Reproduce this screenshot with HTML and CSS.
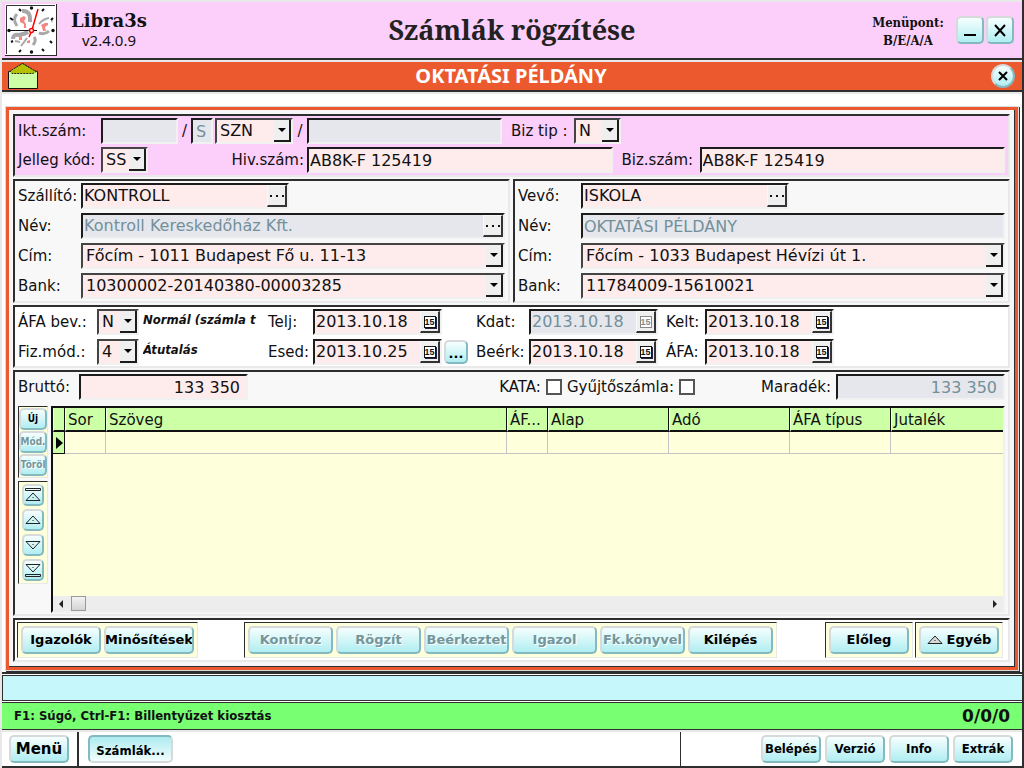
FILE: index.html
```html
<!DOCTYPE html>
<html lang="hu">
<head>
<meta charset="utf-8">
<title>Számlák rögzítése</title>
<link rel="stylesheet" href="styles.css">
</head>
<body>
<div class="app">
  <header class="titlebar">
    <svg class="clock" viewBox="0 0 52 52" width="52" height="52" aria-hidden="true">
      <rect width="52" height="52" fill="#2b2b2b"/>
      <rect width="51" height="51" fill="#fff"/>
      <path d="M1.500 50V1.500H50" fill="none" stroke="#333"/>
      <g fill="none" stroke="#a8a8a8" stroke-width="3">
        <path d="M12 22Q7 15 12 10"/>
        <path d="M17 7Q26 6 25 18" stroke-width="4"/>
        <path d="M34 20Q38 15 44 14" stroke-width="2"/>
        <path d="M46 17h2" stroke="#ccc"/>
        <path d="M34 29Q40 31 44 27"/>
        <path d="M8 35Q8 30 14 31Q20 30 23 28" stroke-width="4"/>
        <path d="M10 37l5 1M22 34Q20 37 16 42" stroke-width="2"/>
        <path d="M29 33Q32 36 28 41"/>
      </g>
      <g fill="#f58580">
        <path d="M15 14l4-2 2 2-2 3 2 3v4h-2v-4l-4-2zM36 21l4-2h3v2l-3 2 1 4h-3l-1-4zM14 33l3-1v4h-3zM22 37l3-1v3h-3z"/>
      </g>
      <g fill="#111">
        <circle cx="26.500" cy="4" r="1.700"/><circle cx="26.500" cy="48" r="1.700"/><circle cx="4" cy="26.500" r="1.700"/><circle cx="48" cy="26.500" r="1.700"/>
      </g>
      <path d="M14 5l2 2M37 7l2-2M5 14l3 2M46 16l2-2M6 38l2-1M45 37l2 2M14 48l2-2M37 45l2 2" stroke="#111" stroke-width="2"/>
      <path d="M5 26.500H32" stroke="#111"/>
      <path d="M33 5L27 26L24 33" fill="none" stroke="#f00" stroke-width="1.500"/>
      <circle cx="26.500" cy="26.500" r="2" fill="#fff" stroke="#f00" stroke-width="1.500"/>
    </svg>
    <div class="brand"><strong>Libra3s</strong><span>v2.4.0.9</span></div>
    <h1>Számlák rögzítése</h1>
    <div class="menupoint"><span>Menüpont:</span><span>B/E/A/A</span></div>
    <div class="winbuttons">
      <button class="btn win" aria-label="Kis méret"><svg width="14" height="14" viewBox="0 0 14 14"><path d="M1 12H13" stroke="#000" stroke-width="2"/></svg></button>
      <button class="btn win" aria-label="Bezárás"><svg width="14" height="14" viewBox="0 0 14 14"><path d="M2 2L12 13M12 2L2 13" stroke="#000" stroke-width="2"/></svg></button>
    </div>
  </header>

  <div class="banner">
    <svg width="32" height="28" viewBox="0 0 32 28" aria-hidden="true">
      <path d="M1.500 9.500L4 9L15.500 1.500L28 9L30.500 9.500V26.500H1.500Z" fill="#ccffa6" stroke="#111"/>
      <path d="M15.500 1.500L29 9.500L26 11.500H5L3 9Z" fill="#b4c000" stroke="#222" stroke-dasharray="2 1"/>
    </svg>
    <h2>OKTATÁSI PÉLDÁNY</h2>
    <button class="btn round" aria-label="Panel bezárása"><svg width="10" height="10" viewBox="0 0 10 10"><path d="M1 1L9 9M9 1L1 9" stroke="#000" stroke-width="2"/></svg></button>
  </div>

  <main class="workspace">
    <form class="frame">
      <section class="panel pink">
        <div class="row">
          <label class="lead" for="ikt">Ikt.szám:</label>
          <input id="ikt" class="field off w-ikt" disabled>
          <span class="slash">/</span>
          <input class="field off w-s" value="S" aria-label="Típus" disabled>
          <span class="combo w-szn"><select aria-label="Sorozat"><option>SZN</option></select><i class="arrow"></i></span>
          <span class="slash">/</span>
          <input class="field off w-long" aria-label="Sorszám" disabled>
          <label class="biztip" for="biztip">Biz tip :</label>
          <span class="combo w-n"><select id="biztip"><option>N</option></select><i class="arrow"></i></span>
        </div>
        <div class="row">
          <label class="lead" for="jelleg">Jelleg kód:</label>
          <span class="combo w-n"><select id="jelleg"><option>SS</option></select><i class="arrow"></i></span>
          <label class="hiv" for="hiv">Hiv.szám:</label>
          <input id="hiv" class="field grow" value="AB8K-F 125419">
          <label class="biz" for="biz">Biz.szám:</label>
          <input id="biz" class="field grow" value="AB8K-F 125419">
        </div>
      </section>

      <div class="partners">
        <section class="panel partner">
          <label for="szall">Szállító:</label>
          <span class="picker short"><input id="szall" value="KONTROLL"><button type="button" class="face" aria-label="Keresés"><i class="dots"></i></button></span>
          <label for="sznev">Név:</label>
          <span class="picker off"><input id="sznev" value="Kontroll Kereskedőház Kft." disabled><button type="button" class="face" aria-label="Keresés"><i class="dots"></i></button></span>
          <label for="szcim">Cím:</label>
          <span class="combo"><select id="szcim"><option>Főcím - 1011 Budapest Fő u. 11-13</option></select><i class="arrow"></i></span>
          <label for="szbank">Bank:</label>
          <span class="combo"><select id="szbank"><option>10300002-20140380-00003285</option></select><i class="arrow"></i></span>
        </section>
        <section class="panel partner">
          <label for="vevo">Vevő:</label>
          <span class="picker short"><input id="vevo" value="ISKOLA"><button type="button" class="face" aria-label="Keresés"><i class="dots"></i></button></span>
          <label for="vnev">Név:</label>
          <input id="vnev" class="field off" value="OKTATÁSI PÉLDÁNY" disabled>
          <label for="vcim">Cím:</label>
          <span class="combo"><select id="vcim"><option>Főcím - 1033 Budapest Hévízi út 1.</option></select><i class="arrow"></i></span>
          <label for="vbank">Bank:</label>
          <span class="combo"><select id="vbank"><option>11784009-15610021</option></select><i class="arrow"></i></span>
        </section>
      </div>

      <section class="panel white dates">
        <label for="afabev">ÁFA bev.:</label>
        <span class="combo narrow"><select id="afabev"><option>N</option></select><i class="arrow"></i></span>
        <em>Normál (számla t</em>
        <label for="telj">Telj:</label>
        <span class="picker"><input id="telj" value="2013.10.18"><button type="button" class="face cal" aria-label="Naptár"><i>15</i></button></span>
        <span></span>
        <label for="kdat">Kdat:</label>
        <span class="picker off"><input id="kdat" value="2013.10.18" disabled><button type="button" class="face cal" aria-label="Naptár" disabled><i>15</i></button></span>
        <label for="kelt">Kelt:</label>
        <span class="picker"><input id="kelt" value="2013.10.18"><button type="button" class="face cal" aria-label="Naptár"><i>15</i></button></span>

        <label for="fizmod">Fiz.mód.:</label>
        <span class="combo narrow"><select id="fizmod"><option>4</option></select><i class="arrow"></i></span>
        <em>Átutalás</em>
        <label for="esed">Esed:</label>
        <span class="picker"><input id="esed" value="2013.10.25"><button type="button" class="face cal" aria-label="Naptár"><i>15</i></button></span>
        <button type="button" class="btn more">...</button>
        <label for="beerk">Beérk:</label>
        <span class="picker"><input id="beerk" value="2013.10.18"><button type="button" class="face cal" aria-label="Naptár"><i>15</i></button></span>
        <label for="afa">ÁFA:</label>
        <span class="picker"><input id="afa" value="2013.10.18"><button type="button" class="face cal" aria-label="Naptár"><i>15</i></button></span>
      </section>

      <section class="panel items">
        <div class="row totals">
          <label class="brutto" for="brutto">Bruttó:</label>
          <input id="brutto" class="field num" value="133 350">
          <div class="checks">
            <label for="kata">KATA:</label><input type="checkbox" id="kata">
            <label for="gyujto">Gyűjtőszámla:</label><input type="checkbox" id="gyujto">
          </div>
          <label for="maradek" class="maradek">Maradék:</label>
          <input id="maradek" class="field num off" value="133 350" disabled>
        </div>
        <div class="gridarea">
          <div class="tools">
            <div class="group edit">
              <button type="button" class="btn tiny">Új</button>
              <button type="button" class="btn tiny" disabled>Mód.</button>
              <button type="button" class="btn tiny" disabled>Töröl</button>
            </div>
            <div class="group nav">
              <button type="button" class="btn step" aria-label="Első"><svg width="16" height="14" viewBox="0 0 16 14"><path d="M.5 .5h15v2H.5ZM8 5L15 12.500H1Z"/><path d="M7.500 9.500h1"/></svg></button>
              <button type="button" class="btn step" aria-label="Előző"><svg width="16" height="14" viewBox="0 0 16 14"><path d="M8 3L15 10.500H1Z"/><path d="M7.500 7.500h1"/></svg></button>
              <button type="button" class="btn step" aria-label="Következő"><svg width="16" height="14" viewBox="0 0 16 14"><path d="M1 3.500H15L8 11Z"/><path d="M7.500 6.500h1"/></svg></button>
              <button type="button" class="btn step" aria-label="Utolsó"><svg width="16" height="14" viewBox="0 0 16 14"><path d="M1 1.500H15L8 9ZM.5 11.500h15v2H.5Z"/><path d="M7.500 4.500h1"/></svg></button>
            </div>
          </div>
          <div class="sheet">
            <div class="sheetbody">
              <table>
                <colgroup><col class="c-mark"><col class="c-sor"><col class="c-text"><col class="c-af"><col class="c-num"><col class="c-num"><col class="c-typ"><col class="c-jut"></colgroup>
                <thead><tr><th></th><th>Sor</th><th>Szöveg</th><th>ÁF...</th><th>Alap</th><th>Adó</th><th>ÁFA típus</th><th>Jutalék</th></tr></thead>
                <tbody><tr><td class="mark"><svg width="7" height="12" viewBox="0 0 7 12"><path d="M0 0L7 6L0 12Z"/></svg></td><td></td><td></td><td></td><td></td><td></td><td></td><td></td></tr></tbody>
              </table>
            </div>
            <div class="scroll" aria-hidden="true">
              <svg width="4" height="8" viewBox="0 0 4 8"><path d="M4 0V8L0 4Z"/></svg>
              <span class="thumb"></span>
              <svg width="4" height="8" viewBox="0 0 4 8"><path d="M0 0V8L4 4Z"/></svg>
            </div>
          </div>
        </div>
      </section>

      <section class="panel white actions">
        <div class="group">
          <button type="button" class="btn w80">Igazolók</button>
          <button type="button" class="btn w90">Minősítések</button>
        </div>
        <div class="group center">
          <button type="button" class="btn" disabled>Kontíroz</button>
          <button type="button" class="btn" disabled>Rögzít</button>
          <button type="button" class="btn" disabled>Beérkeztet</button>
          <button type="button" class="btn" disabled>Igazol</button>
          <button type="button" class="btn" disabled>Fk.könyvel</button>
          <button type="button" class="btn">Kilépés</button>
        </div>
        <div class="group"><button type="button" class="btn w80">Előleg</button></div>
        <div class="group"><button type="button" class="btn w80"><svg width="16" height="10" viewBox="0 0 16 10"><path d="M8 1L15 8.500H1Z" fill="#d8d8d8" stroke="#222"/><path d="M7.500 5.500h1" stroke="#222"/></svg>Egyéb</button></div>
      </section>
    </form>
  </main>

  <div class="message"></div>
  <div class="status"><span>F1: Súgó, Ctrl-F1: Billentyűzet kiosztás</span><strong>0/0/0</strong></div>
  <footer class="taskbar">
    <div class="start"><button class="btn menu">Menü</button></div>
    <div class="tasks"><button class="btn pressed">Számlák...</button></div>
    <div class="system">
      <button class="btn">Belépés</button><button class="btn">Verzió</button><button class="btn">Info</button><button class="btn">Extrák</button>
    </div>
  </footer>
</div>
</body>
</html>
```

FILE: styles.css
```css
* { box-sizing: border-box; }

body {
  margin: 0;
  font: 15px/20px Verdana, "DejaVu Sans", sans-serif;
  color: #111;
}

.app {
  display: flex;
  flex-direction: column;
  min-height: 100vh;
  background: #fff;
  border-left: 2px solid #e8e8e8;
  border-right: 2px solid #2e2e2e;
}

input, select, button { font: inherit; color: inherit; margin: 0; }
svg { display: block; flex: none; }

/* Title bar */
.titlebar {
  display: grid;
  grid-template-columns: 66px 87px 1fr 84px 64px;
  align-items: center;
  height: 60px;
  padding: 0 8px 0 3px;
  background: #fccefa;
  border-top: 2px solid #e8e8e8;
  border-bottom: 2px solid #2e2e2e;
}
.brand {
  display: flex;
  flex-direction: column;
  align-items: flex-start;
}
.brand strong { font: bold 18px/20px Georgia, "DejaVu Serif", serif; }
.brand span { font: 15px/18px "Trebuchet MS", "Noto Sans", sans-serif; padding-left: 11px; }
h1 {
  margin: 0;
  text-align: center;
  color: #222;
  font: bold 27px/36px Georgia, "Noto Serif", "Liberation Serif", serif;
}
.menupoint {
  display: flex;
  flex-direction: column;
  padding-top: 4px;
  text-align: center;
  font: bold 13px/18px "Droid Serif", "DejaVu Serif Condensed", "DejaVu Serif", serif;
}
.winbuttons { display: flex; gap: 2px; justify-content: flex-end; }

/* Glossy buttons */
.btn {
  display: flex;
  align-items: center;
  justify-content: center;
  gap: 4px;
  width: 85px;
  height: 28px;
  padding: 0;
  overflow: hidden;
  white-space: nowrap;
  font: bold 13px/16px Verdana, "DejaVu Sans", sans-serif;
  color: #000;
  background: linear-gradient(#f6fefe, #b0eef2);
  border: 2px solid;
  border-color: #d6dadb #84b9bf #84b9bf #d6dadb;
  border-radius: 5px;
}
.btn:disabled { color: #74969b; text-shadow: 1px 1px #fff; }
.btn.w80 { width: 80px; }
.btn.w90 { width: 90px; }
.btn.win { width: 28px; }
.btn.round { width: 24px; height: 24px; border-radius: 50%; justify-self: end; }
.btn.more { width: 24px; height: 24px; align-items: flex-end; }
.btn.tiny { width: 28px; height: 22px; font: bold 10px/16px "DejaVu Sans Condensed", Tahoma, sans-serif; }
.btn.step { width: 22px; height: 22px; }
.btn.step path { fill: none; stroke: #222; }
.btn.pressed {
  padding-top: 4px;
  background: linear-gradient(#aeecf0, #f2fdfd);
  border-color: #84b9bf #d6dadb #d6dadb #84b9bf;
}

/* Banner */
.banner {
  display: grid;
  grid-template-columns: 32px 1fr 32px;
  align-items: center;
  height: 32px;
  padding: 0 7px 0 5px;
  background: #ec592e;
  border-top: 2px solid #e8e8e8;
  border-bottom: 2px solid #2e2e2e;
}
.banner h2 {
  margin: 0;
  text-align: center;
  color: #fff;
  font: bold 20px/26px "Trebuchet MS", "Noto Sans", sans-serif;
}

/* Work area */
.workspace {
  flex: 1;
  display: flex;
  padding: 13px 4px 2px 4px;
  border-top: 2px solid #e8e8e8;
  border-bottom: 2px solid #2e2e2e;
}
.frame {
  flex: 1;
  min-width: 0;
  display: flex;
  flex-direction: column;
  gap: 2px;
  padding: 4px 5px 5px 4px;
  background: #f7f7f9;
  border: 3px solid #ec592e;
  outline: 1px solid #d8dadb;
  box-shadow: inset -1px -1px #2e2e2e, 1px 1px 0 1px #2e2e2e;
}
.panel {
  border: 2px solid;
  border-color: #2e2e2e #e9e9e9 #e9e9e9 #2e2e2e;
  background: #f8f8f8;
  padding: 2px 3px;
}
.pink { background: #fccefa; display: flex; flex-direction: column; gap: 3px; }
.white { background: #fff; }
.row { display: flex; align-items: center; }
label, .slash { white-space: nowrap; }

/* Fields */
.field, .combo, .picker {
  height: 26px;
  min-width: 0;
  border: 2px solid;
  border-color: #1c1c1c #f1f1f1 #f1f1f1 #1c1c1c;
  border-radius: 0;
  background: #feebeb;
  font-size: 16px;
}
.field { padding: 0 1px; }
.field.off, .picker.off { background: #e5e7ed; color: #73909a; }
.grow { flex: 1; }
.combo { display: flex; position: relative; border-color: #444 #f1f1f1 #f1f1f1 #444; }
.combo select {
  appearance: none;
  width: 100%;
  padding: 0 17px 0 3px;
  border: 0;
  background: transparent;
}
.arrow {
  position: absolute;
  top: 0;
  right: 0;
  bottom: 0;
  width: 17px;
  display: grid;
  place-items: center;
  pointer-events: none;
  background: #efefef;
  border-right: 2px solid #1c1c1c;
  border-bottom: 2px solid #1c1c1c;
}
.arrow::after {
  content: "";
  border: 4px solid transparent;
  border-top-color: #000;
  border-bottom: 0;
}
.picker { display: flex; }
.picker input {
  flex: 1;
  min-width: 0;
  padding: 0 1px;
  border: 0;
  background: transparent;
}
.face {
  width: 20px;
  flex: none;
  padding: 0;
  display: grid;
  place-items: center;
  background: #efefef;
  border: 1px solid;
  border-color: #f8f8f8 #333 #333 #f8f8f8;
  border-right-width: 2px;
  border-bottom-width: 2px;
}
.dots { width: 14px; height: 2px; background: repeating-linear-gradient(90deg, #111 0 2px, transparent 2px 6px); }
.cal i {
  width: 12px;
  height: 12px;
  font: bold 9px/10px "Liberation Sans", sans-serif;
  text-align: center;
  background: #fff;
  border: 1px solid #111;
  box-shadow: 1px 1px #224;
}
.cal:disabled i { border-color: #888; color: #888; box-shadow: none; }

.lead { width: 83px; }
.w-ikt { width: 77px; }
.slash { width: 13px; text-align: center; }
.w-s { width: 22px; margin-right: 2px; padding: 0 3px; }
.w-szn { width: 78px; }
.w-szn + .slash { width: 14px; }
.w-long { width: 195px; }
.biztip { width: 72px; padding-left: 9px; }
.w-n { width: 47px; }
.hiv { width: 159px; padding-right: 3px; text-align: right; }
.biz { width: 87px; padding-left: 9px; }

.partners { display: flex; gap: 3px; }
.partner {
  flex: 1;
  display: grid;
  grid-template-columns: 63px 1fr;
  gap: 4px 0;
  align-items: center;
  padding-bottom: 2px;
}
.short { width: 208px; }

.dates {
  display: grid;
  grid-template-columns: 79px 46px 125px 45px 131px 32px 53px 137px 39px 129px;
  gap: 4px 0;
  align-items: center;
  padding-bottom: 1px;
}
.dates .combo { width: 42px; }
.dates .picker { width: 129px; }
.dates em {
  overflow: hidden;
  padding-bottom: 4px;
  white-space: nowrap;
  font: italic bold 13px/16px "DejaVu Sans Condensed", Tahoma, sans-serif;
  width: 122px;
}

/* Items */
.items { flex: 1; display: flex; flex-direction: column; gap: 6px; padding-bottom: 1px; }
.brutto { width: 61px; }
.num { width: 169px; padding: 0 6px; text-align: right; }
.checks { flex: 1; display: flex; align-items: center; justify-content: flex-end; gap: 5px; }
.checks input {
  appearance: none;
  width: 16px;
  height: 16px;
  background: #fff;
  border: 2px solid #555;
}
.maradek { padding: 0 5px 0 66px; }
.gridarea { flex: 1; display: flex; gap: 3px; }
.tools { width: 30px; display: flex; flex-direction: column; align-items: flex-start; gap: 3px; }
.group {
  display: flex;
  gap: 3px;
  padding: 3px;
  background: #feffdb;
  border: 1px solid;
  border-color: #2e2e2e #e9e9e9 #e9e9e9 #2e2e2e;
}
.edit { flex-direction: column; gap: 1px; padding: 1px 0; }
.nav { flex-direction: column; padding: 2px 3px; }
.sheet {
  flex: 1;
  min-width: 0;
  display: flex;
  flex-direction: column;
  background: #feffdb;
  border: 2px solid;
  border-color: #111 #f1f1f1 #f1f1f1 #111;
}
.sheetbody { flex: 1; }
table { width: 100%; table-layout: fixed; border-collapse: separate; border-spacing: 0; }
.c-mark { width: 12px; }
.c-sor, .c-af { width: 41px; }
.c-text { width: 401px; }
.c-num { width: 121px; }
.c-typ { width: 101px; }
th {
  height: 24px;
  padding: 1px 2px 0;
  overflow: hidden;
  white-space: nowrap;
  text-align: left;
  font-weight: normal;
  background: #ccffa6;
  border-right: 1px solid #111;
  border-left: 1px solid #efffe0;
  border-bottom: 2px solid #111;
}
td { height: 22px; padding: 0; border-right: 1px solid #c4c4c4; border-bottom: 1px solid #c4c4c4; }
th:last-child, td:last-child { border-right: 0; }
.mark { padding-left: 3px; background: #ccffa6; border-color: #111; }
.scroll {
  display: flex;
  align-items: center;
  height: 15px;
  padding: 0 6px;
  background: #ededed;
  fill: #222;
}
.thumb {
  width: 15px;
  height: 15px;
  margin: 0 auto 0 8px;
  background: linear-gradient(#f3f3f3, #d4d4d4);
  border: 1px solid #999;
}

/* Actions */
.actions { display: flex; padding: 2px 5px 2px 2px; gap: 2px; }
.actions .center { margin: 0 auto 0 44px; }

/* Bottom bars */
.message {
  height: 26px;
  margin: 1px 0 0;
  background: #c5f7fb;
  border: 1px solid #2e2e2e;
  border-right: 0;
}
.status {
  display: flex;
  align-items: center;
  justify-content: space-between;
  height: 28px;
  margin-top: 1px;
  padding: 0 12px 0 12px;
  background: #78ff72;
  border-top: 1px solid #2e2e2e;
  border-bottom: 1px solid #2e2e2e;
}
.status span { font: bold 13px/16px "DejaVu Sans Condensed", Tahoma, sans-serif; }
.status strong { font-size: 17px; }
.taskbar {
  display: flex;
  height: 38px;
  border-top: 2px solid #e8e8e8;
  border-bottom: 2px solid #2e2e2e;
}
.start { padding: 3px 8px 0 7px; border-right: 2px solid #2e2e2e; }
.tasks { flex: 1; padding: 3px 9px 0; }
.system { display: flex; gap: 4px; padding: 3px 9px 0 80px; border-left: 1px solid #2e2e2e; }
.system .btn, .menu { width: 60px; }
.system .btn, .pressed { font-family: "DejaVu Sans Condensed", Tahoma, sans-serif; }
.menu { font-size: 15px; }
```
